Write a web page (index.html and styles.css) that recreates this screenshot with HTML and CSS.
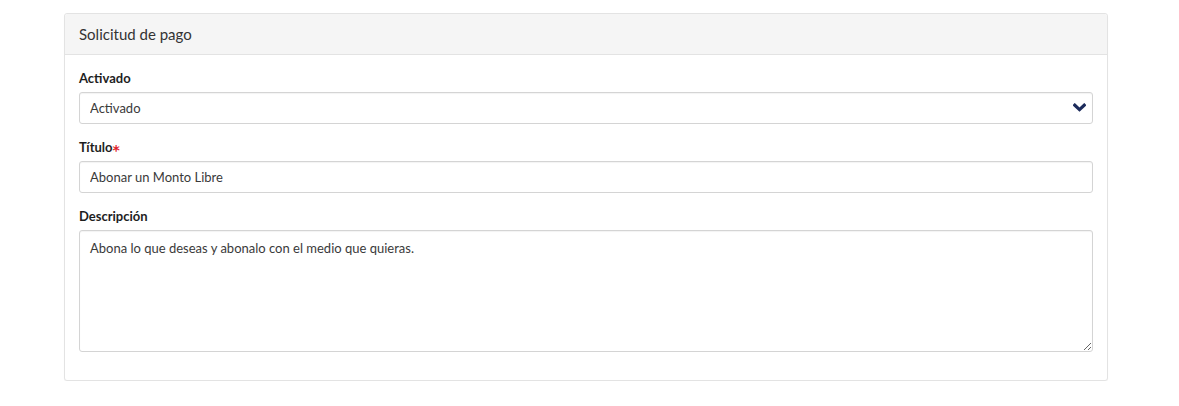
FILE: index.html
```html
<!DOCTYPE html>
<html lang="es">

<head>
    <meta charset="UTF-8">
    <title>Solicitud de pago</title>
    <link rel="stylesheet" href="styles.css">
</head>

<body>
    <div class="page">
        <div class="panel">
            <div class="panel-heading">Solicitud de pago</div>
            <div class="panel-body">
                <div class="form-group">
                    <label class="control-label">Activado</label>
                    <div class="select-wrap">
                        <select class="form-control">
                            <option>Activado</option>
                            <option>Desactivado</option>
                        </select>
                        <svg class="chevron" width="13" height="9" viewBox="0 0 13 9">
                            <path d="M1.8 2.2 L6.5 6.6 L11.2 2.2" fill="none" stroke="#1d2c5c" stroke-width="3.2" stroke-linecap="square"/>
                        </svg>
                    </div>
                </div>
                <div class="form-group">
                    <label class="control-label">Título<span class="required">*</span></label>
                    <input type="text" class="form-control" value="Abonar un Monto Libre">
                </div>
                <div class="form-group">
                    <label class="control-label">Descripción</label>
                    <textarea class="form-control textarea">Abona lo que deseas y abonalo con el medio que quieras.</textarea>
                </div>
            </div>
        </div>
    </div>
</body>

</html>
```

FILE: styles.css
```css
* {
    margin: 0;
    padding: 0;
    box-sizing: border-box;
}

body {
    font-family: Lato, 'Liberation Sans', Arial, sans-serif;
    color: #333;
    background-color: white;
}

.page {
    padding: 13px 71px 0 64px;
}

/* panel */
.panel {
    border: 1px solid #e3e3e3;
    border-radius: 3px;
    background-color: white;
    box-shadow: 0 1px 1px rgba(0, 0, 0, 0.04);
}

.panel-heading {
    height: 41px;
    padding: 0 14px;
    line-height: 40px;
    font-size: 15px;
    color: #333;
    background-color: #f5f5f5;
    border-bottom: 1px solid #e3e3e3;
    border-radius: 3px 3px 0 0;
}

.panel-body {
    padding: 14px 14px 14px;
}

.form-group {
    display: flex;
    flex-direction: column;
    margin-bottom: 14px;
}

.control-label {
    font-size: 13px;
    font-weight: bold;
    line-height: 18px;
    margin-bottom: 5px;
    color: #1e1e1e;
}

.required {
    color: #e0202a;
    font-family: 'DejaVu Sans', sans-serif;
    font-size: 14px;
    line-height: 10px;
    position: relative;
    top: 3px;
}

.form-control {
    width: 100%;
    height: 32px;
    padding: 0 10px;
    font-family: Lato, 'Liberation Sans', Arial, sans-serif;
    font-size: 13px;
    color: #3a3a3a;
    background-color: white;
    border: 1px solid #d4d4d4;
    border-radius: 3px;
    box-shadow: inset 0 1px 1px rgba(0, 0, 0, 0.05);
    outline: none;
}

.select-wrap {
    position: relative;
}

.select-wrap select {
    appearance: none;
    -webkit-appearance: none;
}

.chevron {
    position: absolute;
    right: 7px;
    top: 11px;
    pointer-events: none;
}

.textarea {
    height: 122px;
    padding: 8px 10px;
    line-height: 18px;
    resize: vertical;
}
```
